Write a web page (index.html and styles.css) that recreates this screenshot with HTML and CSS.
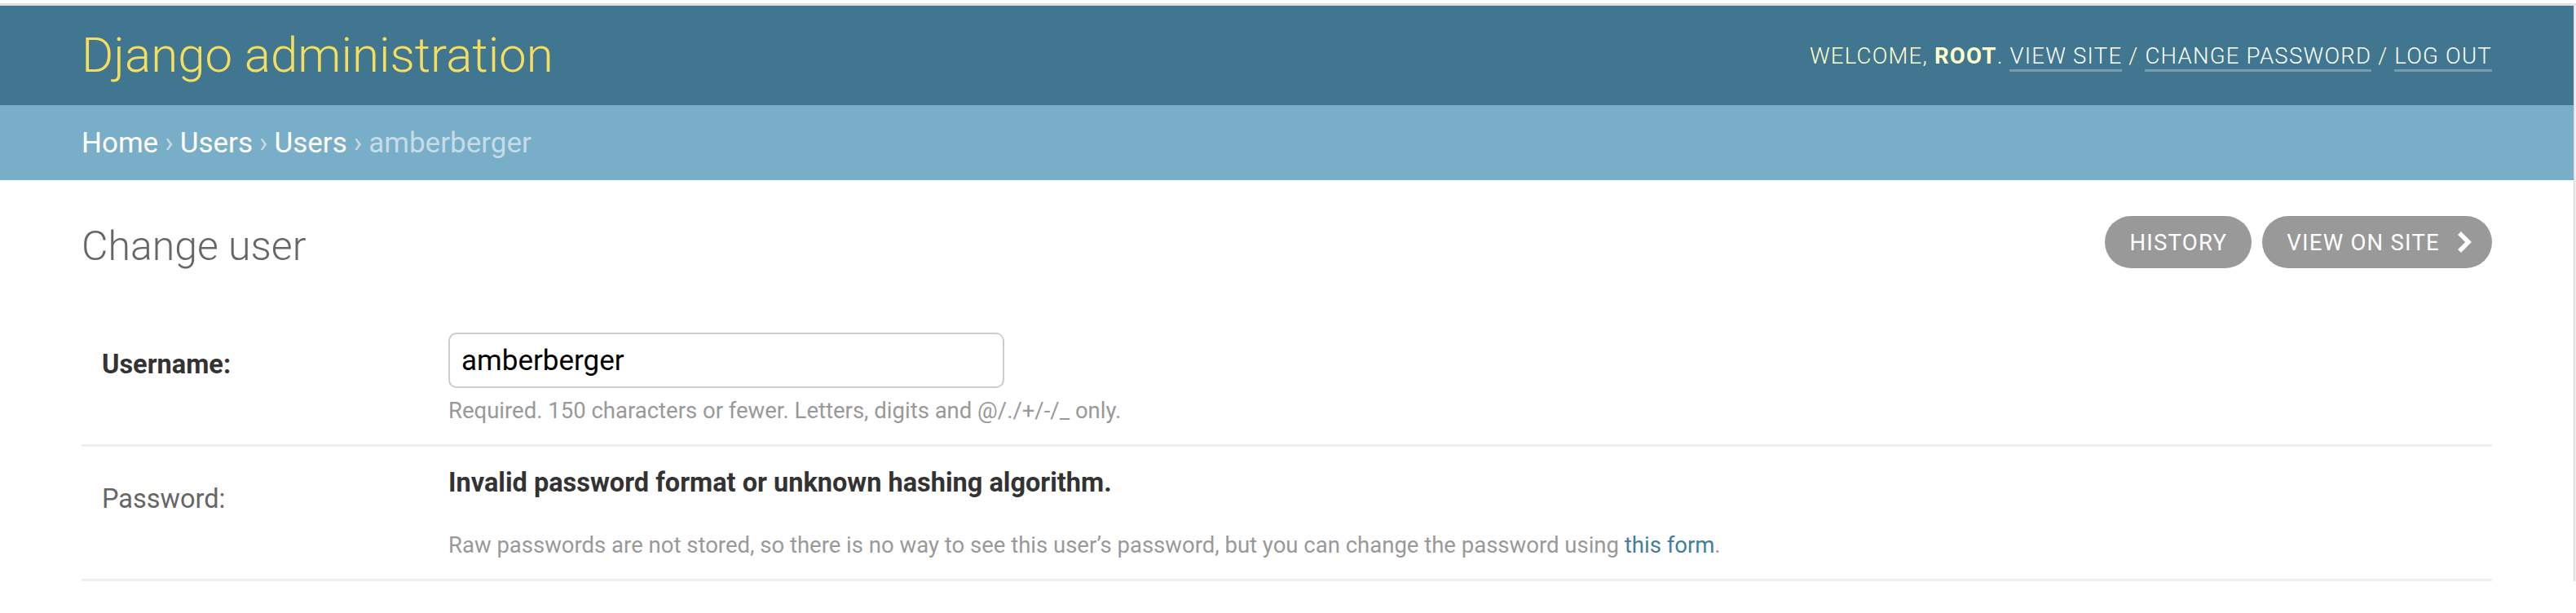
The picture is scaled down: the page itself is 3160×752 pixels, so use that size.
FILE: index.html
```
<!DOCTYPE html>
<html lang="en">
<head>
<meta charset="utf-8">
<title>Change user | Django site admin</title>
<link rel="stylesheet" href="styles.css">
</head>
<body>
<div class="topline"></div>
<div class="frame">
  <div class="page">
    <header class="header">
      <div class="site-name">Django administration</div>
      <div class="user-tools">Welcome, <strong>root</strong>. <a href="#">View site</a> / <a href="#">Change password</a> / <a href="#">Log out</a></div>
    </header>
    <nav class="breadcrumbs"><a href="#">Home</a><span class="sep">›</span><a href="#">Users</a><span class="sep">›</span><a href="#">Users</a><span class="sep">›</span><span class="current">amberberger</span></nav>
    <main class="content">
      <div class="title-row">
        <h1 class="title">Change user</h1>
        <div class="object-tools">
          <a class="tool" href="#">History</a>
          <a class="tool tool-site" href="#">View on site<svg class="chev" width="17" height="26" viewBox="0 0 17 26"><polyline points="2,2 13,13 2,24" fill="none" stroke="#fff" stroke-width="5.5" stroke-linejoin="miter"/></svg></a>
        </div>
      </div>
      <div class="form-row row-user">
        <label class="label required-label">Username:</label>
        <div class="field">
          <input class="text-input" type="text" value="amberberger">
          <div class="help">Required. 150 characters or fewer. Letters, digits and @/./+/-/_ only.</div>
        </div>
      </div>
      <div class="form-row row-pass">
        <label class="label">Password:</label>
        <div class="field">
          <div class="readonly"><strong>Invalid password format or unknown hashing algorithm.</strong></div>
          <div class="help help-pass">Raw passwords are not stored, so there is no way to see this user’s password, but you can change the password using <a class="help-link" href="#">this form</a>.</div>
        </div>
      </div>
    </main>
  </div>
  <div class="rail"></div>
</div>
</body>
</html>
```
FILE: styles.css
```
html, body {
  margin: 0;
  padding: 0;
  background: #fff;
}
body {
  font-family: Roboto, "Liberation Sans", sans-serif;
  color: #333;
  width: 3160px;
}
.topline {
  margin-top: 4px;
  height: 3px;
  background: #e1e1e3;
}
.frame {
  display: flex;
}
.page {
  flex: 1;
  min-width: 0;
}
.rail {
  width: 3px;
  background: #eeeeee;
  border-left: 1px solid #d4d4d4;
  box-sizing: border-box;
}
.header {
  height: 122px;
  box-sizing: border-box;
  padding: 0 100px;
  background: #417690;
  display: flex;
  align-items: center;
  justify-content: space-between;
}
.site-name {
  font-size: 60px;
  font-weight: 300;
  color: #f5dd5d;
  line-height: 1.2;
}
.user-tools {
  font-size: 27.5px;
  font-weight: 300;
  letter-spacing: 1.25px;
  text-transform: uppercase;
  color: #ffc;
  line-height: 1.2;
}
.user-tools strong {
  font-weight: 700;
}
.user-tools a {
  color: #fff;
  text-decoration: none;
  border-bottom: 3px solid rgba(255, 255, 255, 0.28);
}
.breadcrumbs {
  height: 92px;
  box-sizing: border-box;
  padding: 0 100px;
  background: #79aec8;
  display: flex;
  align-items: center;
  font-size: 35px;
  color: #c4dce8;
}
.breadcrumbs a {
  color: #fff;
  text-decoration: none;
}
.breadcrumbs .sep {
  margin: 0 8px;
  color: #c4dce8;
}
.current {
  color: #c4dce8;
}
.content {
  padding: 44px 100px 0;
}
.title-row {
  display: flex;
  justify-content: space-between;
  align-items: flex-start;
  margin-bottom: 44px;
}
.title {
  margin: 0;
  font-size: 50px;
  font-weight: 300;
  line-height: 74px;
  color: #666;
}
.object-tools {
  display: flex;
  gap: 13px;
}
.tool {
  height: 64px;
  box-sizing: border-box;
  padding: 0 30px;
  display: flex;
  align-items: center;
  background: #999;
  color: #fff;
  border-radius: 38px;
  font-size: 27.5px;
  letter-spacing: 1.25px;
  text-transform: uppercase;
  text-decoration: none;
}
.tool-site {
  padding-right: 25px;
  gap: 22px;
}
.chev {
  display: block;
}
.form-row {
  display: flex;
  padding: 25px 25px 23px;
  border-bottom: 3px solid #eeeeee;
}
.label {
  width: 425px;
  flex: none;
  box-sizing: border-box;
  padding-top: 19.5px;
  font-size: 32.5px;
  line-height: 38px;
  color: #666;
}
.required-label {
  font-weight: 700;
  color: #333;
}
.field {
  display: flex;
  flex-direction: column;
  align-items: flex-start;
}
.text-input {
  width: 682px;
  height: 68px;
  box-sizing: border-box;
  border: 2.5px solid #ccc;
  border-radius: 10px;
  padding: 0 14px;
  font-family: Roboto, "Liberation Sans", sans-serif;
  font-size: 35px;
  color: #000;
  margin: 0;
}
.help {
  margin-top: 10px;
  font-size: 27.5px;
  line-height: 36px;
  color: #999;
}
.readonly {
  font-size: 32.5px;
  line-height: 38px;
  color: #333;
}
.readonly strong {
  font-weight: 700;
}
.help-pass {
  margin-top: 40px;
}
.help-link {
  color: #447e9b;
  text-decoration: none;
}
```
